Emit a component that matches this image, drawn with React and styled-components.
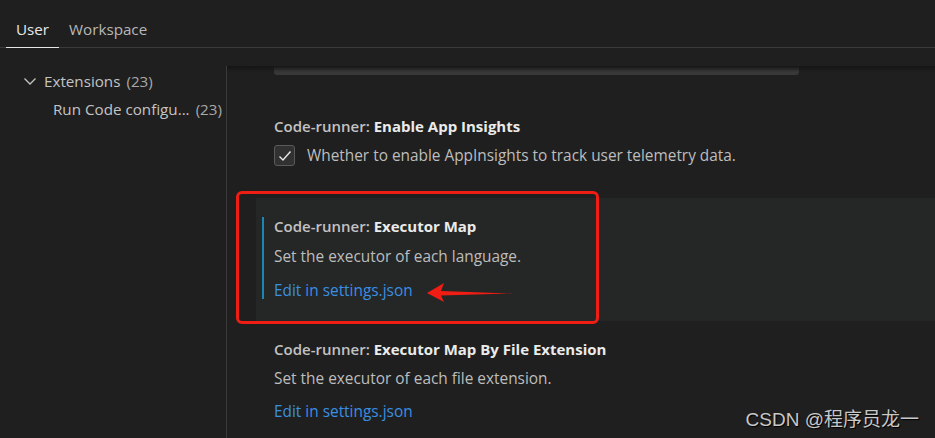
import styled, { createGlobalStyle } from "styled-components";

const GlobalStyles = createGlobalStyle`
  html, body {
    margin: 0;
    padding: 0;
    background: #1f1f1f;
    overflow: hidden;
  }
  body {
    font-family: "Open Sans", "Noto Sans", sans-serif;
    color: #cccccc;
  }
`;

const Page = styled.div`
  position: relative;
  width: 935px;
  height: 438px;
  background: #1f1f1f;
  overflow: hidden;
`;

const TabBar = styled.div`
  display: flex;
  align-items: stretch;
  height: 48px;
  padding-left: 6px;
  border-bottom: 1px solid #3a3a3a;
  box-sizing: border-box;
`;

const Tab = styled.div`
  display: flex;
  align-items: center;
  padding: 11px 10px 0;
  font-size: 15.2px;
  color: ${({ $active }) => ($active ? "#e7e7e7" : "#b8b8b8")};
  border-bottom: 1px solid ${({ $active }) => ($active ? "#e7e7e7" : "transparent")};
  margin-bottom: -1px;
`;

const Body = styled.div`
  display: grid;
  grid-template-columns: 226px 1fr;
  height: 390px;
`;

const Tree = styled.div`
  padding-top: 19px;
  display: flex;
  flex-direction: column;
`;

const TreeItem = styled.div`
  display: flex;
  align-items: center;
  height: 28px;
  padding-left: ${({ $depth }) => 22 + $depth * 31}px;
  font-size: 15.2px;
  color: #c4c4c4;
  white-space: nowrap;
  gap: 6px;
`;

const Count = styled.span`
  color: #a8a8a8;
  margin-left: 6px;
`;

const Content = styled.div`
  margin-top: 18px;
  border-left: 1px solid #3a3a3a;
  position: relative;
`;

const TopShadow = styled.div`
  position: absolute;
  left: 0;
  right: 0;
  top: 0;
  height: 6px;
  background: linear-gradient(#151515, rgba(31, 31, 31, 0));
  pointer-events: none;
`;

const InputTail = styled.div`
  margin-left: 47px;
  width: 525px;
  height: 9px;
  background: #383838;
  border-radius: 0 0 3px 3px;
`;

const Setting = styled.div`
  margin-left: 29px;
  padding: ${({ $pad }) => $pad};
  background: ${({ $focused }) => ($focused ? "#252626" : "transparent")};
  display: flex;
`;

const FocusBar = styled.div`
  width: 2px;
  margin: 19px 10px 22px 6px;
  background: ${({ $show }) => ($show ? "#1a86b2" : "transparent")};
  flex-shrink: 0;
`;

const SettingBody = styled.div`
  display: flex;
  flex-direction: column;
`;

const Title = styled.div`
  font-size: 15px;
  color: #c2c2c2;
  font-weight: 600;
  line-height: 20px;
  b {
    color: #ebebeb;
    font-weight: 700;
  }
`;

const Desc = styled.div`
  font-size: 15.4px;
  color: #bdbdbd;
  line-height: 20px;
  margin-top: ${({ $mt }) => $mt}px;
`;

const Link = styled.a`
  font-size: 15.4px;
  color: #3a8fe0;
  line-height: 20px;
  margin-top: ${({ $mt }) => $mt}px;
  text-decoration: none;
`;

const CheckRow = styled.div`
  display: flex;
  align-items: center;
  gap: 12px;
  margin-top: 9px;
`;

const Checkbox = styled.div`
  width: 21px;
  height: 21px;
  border: 1px solid #5a5a5a;
  border-radius: 3px;
  background: #313131;
  display: flex;
  align-items: center;
  justify-content: center;
  box-sizing: border-box;
`;

const RedBox = styled.div`
  position: absolute;
  left: 236px;
  top: 191px;
  width: 363px;
  height: 133px;
  border: 3px solid #f01d14;
  border-radius: 6px;
  box-sizing: border-box;
  pointer-events: none;
`;

const Arrow = styled.svg`
  position: absolute;
  left: 424px;
  top: 280px;
`;

const Watermark = styled.div`
  position: absolute;
  right: 16px;
  bottom: 7px;
  font-family: "Liberation Sans", "Noto Sans CJK SC", sans-serif;
  font-size: 19px;
  color: #c8c8c8;
  text-shadow: 1px 1px 1px #000;
`;

function Chevron() {
  return (
    <svg width="16" height="16" viewBox="0 0 16 16">
      <path d="M2.5 5.5 L8 11 L13.5 5.5" stroke="#c4c4c4" strokeWidth="1.3" fill="none" />
    </svg>
  );
}

export default function App() {
  return (
    <Page>
      <GlobalStyles />
      <TabBar>
        <Tab $active>User</Tab>
        <Tab>Workspace</Tab>
      </TabBar>
      <Body>
        <Tree>
          <TreeItem $depth={0}>
            <Chevron />
            <span>
              Extensions<Count>(23)</Count>
            </span>
          </TreeItem>
          <TreeItem $depth={1}>
            <span>
              Run Code configu...<Count>(23)</Count>
            </span>
          </TreeItem>
        </Tree>
        <Content>
          <TopShadow />
          <InputTail />
          <Setting $pad="41px 0 0 0">
            <FocusBar />
            <SettingBody>
              <Title>
                Code-runner: <b>Enable App Insights</b>
              </Title>
              <CheckRow>
                <Checkbox>
                  <svg width="16" height="16" viewBox="0 0 16 16">
                    <path d="M2.5 8.5 L6 12 L13.5 3.5" stroke="#e8e8e8" strokeWidth="1.4" fill="none" />
                  </svg>
                </Checkbox>
                <Desc $mt={0}>Whether to enable AppInsights to track user telemetry data.</Desc>
              </CheckRow>
            </SettingBody>
          </Setting>
          <Setting $focused $pad="0" style={{ marginTop: 32, height: 123 }}>
            <FocusBar $show />
            <SettingBody style={{ paddingTop: 18 }}>
              <Title>
                Code-runner: <b>Executor Map</b>
              </Title>
              <Desc $mt={11}>Set the executor of each language.</Desc>
              <Link $mt={14}>Edit in settings.json</Link>
            </SettingBody>
          </Setting>
          <Setting $pad="18px 0 0 0">
            <FocusBar />
            <SettingBody>
              <Title>
                Code-runner: <b>Executor Map By File Extension</b>
              </Title>
              <Desc $mt={10}>Set the executor of each file extension.</Desc>
              <Link $mt={13}>Edit in settings.json</Link>
            </SettingBody>
          </Setting>
        </Content>
      </Body>
      <RedBox />
      <Arrow width="92" height="26" viewBox="0 0 92 26">
        <path d="M3 13 L20 3 L17 11 L89 13.5 L17 15.5 L20 22 Z" fill="#f01d14" />
      </Arrow>
      <Watermark>CSDN @程序员龙一</Watermark>
    </Page>
  );
}
